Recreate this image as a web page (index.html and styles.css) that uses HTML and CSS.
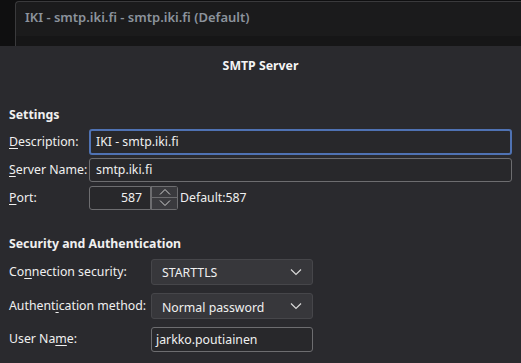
FILE: index.html
```html
<!DOCTYPE html>
<html>
<head>
<meta charset="utf-8">
<link rel="stylesheet" href="styles.css">
</head>
<body>
<div class="backdrop">
  <div class="bg-panel">
    <div class="bg-title">IKI - smtp.iki.fi - smtp.iki.fi (Default)</div>
    <div class="bg-strip"></div>
  </div>
</div>
<div class="dialog">
  <div class="dlg-title">SMTP Server</div>
  <div class="section">Settings</div>
  <div class="grid1">
    <label class="lbl"><u>D</u>escription:</label>
    <div class="input focus">IKI - smtp.iki.fi</div>
    <label class="lbl"><u>S</u>erver Name:</label>
    <div class="input">smtp.iki.fi</div>
    <label class="lbl"><u>P</u>ort:</label>
    <div class="port-row">
      <div class="input port">587</div>
      <div class="spin">
        <div class="spin-btn"><svg width="12" height="8" viewBox="0 0 12 8"><path d="M1 6.5 L6 1.5 L11 6.5" fill="none" stroke="#d0d0d0" stroke-width="1"/></svg></div>
        <div class="spin-btn"><svg width="12" height="8" viewBox="0 0 12 8"><path d="M1 1.5 L6 6.5 L11 1.5" fill="none" stroke="#d0d0d0" stroke-width="1"/></svg></div>
      </div>
      <span class="default">Default:587</span>
    </div>
  </div>
  <div class="section sec2">Security and Authentication</div>
  <div class="grid2">
    <label class="lbl">Co<u>n</u>nection security:</label>
    <div class="combo"><span>STARTTLS</span><svg width="12" height="8" viewBox="0 0 12 8"><path d="M1 1.5 L6 6.5 L11 1.5" fill="none" stroke="#d8d8d8" stroke-width="1.2"/></svg></div>
    <label class="lbl">Authent<u>i</u>cation method:</label>
    <div class="combo c2"><span>Normal password</span><svg width="12" height="8" viewBox="0 0 12 8"><path d="M1 1.5 L6 6.5 L11 1.5" fill="none" stroke="#d8d8d8" stroke-width="1.2"/></svg></div>
    <label class="lbl">User Na<u>m</u>e:</label>
    <div class="input user">jarkko.poutiainen</div>
  </div>
</div>
</body>
</html>
```
FILE: styles.css
```css
* { box-sizing: border-box; }
html, body { margin: 0; padding: 0; }
body {
  width: 521px;
  height: 363px;
  overflow: hidden;
  background: #2a2a2e;
  font-family: "Noto Sans", "DejaVu Sans", sans-serif;
  font-size: 12.3px;
  color: #f0f0f0;
}
.backdrop {
  height: 46px;
  background: #0f0f10;
  padding-left: 15px;
  padding-top: 1px;
}
.bg-panel {
  height: 45px;
  background: #1b1b1c;
  border-top: 1px solid #3a3a3c;
  border-left: 1px solid #3a3a3c;
  border-top-left-radius: 4px;
  display: flex;
  flex-direction: column;
}
.bg-title {
  height: 34px;
  padding-left: 9px;
  padding-top: 6px;
  color: #8c939c;
  font-weight: 600;
  font-size: 13px;
}
.bg-strip {
  flex: 1;
  background: #161617;
}
.dialog {
  padding: 0 9px;
}
.dlg-title {
  text-align: center;
  font-weight: 700;
  line-height: 18px;
  padding-top: 11px;
  height: 60px;
  color: #f4f4f4;
}
.section {
  font-weight: 700;
  line-height: 18px;
  height: 23px;
  color: #f0f0f0;
}
.sec2 { height: 24px; }
.grid1 {
  display: grid;
  grid-template-columns: 80px 1fr;
  grid-template-rows: 26px 24px 24px;
  row-gap: 3px;
  align-items: center;
  margin-bottom: 26px;
}
.grid1 > :nth-child(5), .grid1 > :nth-child(6) { margin-top: 1px; }
.lbl { line-height: 18px; white-space: nowrap; }
u { text-decoration-thickness: 1px; text-underline-offset: 2px; }
.input {
  height: 24px;
  border: 1px solid #6d6d70;
  border-radius: 3px;
  background: #28282b;
  padding: 0 6px;
  line-height: 22px;
  color: #f0f0f0;
  white-space: nowrap;
}
.input.focus {
  border: 2px solid #4f72b3;
  line-height: 22px;
  padding-left: 5px;
  height: 26px;
}
.port-row {
  display: flex;
  align-items: center;
}
.input.port {
  width: 62px;
  text-align: right;
  padding-right: 8px;
  border-radius: 3px 0 0 3px;
  height: 24px;
}
.spin {
  width: 27px;
  height: 24px;
  border: 1px solid #6d6d70;
  border-left: none;
  border-radius: 0 3px 3px 0;
  display: flex;
  flex-direction: column;
  background: #2f2f33;
}
.spin-btn {
  flex: 1;
  display: flex;
  align-items: center;
  justify-content: center;
  background: #3a3a3e;
  border-left: 1px solid #6d6d70;
}
.spin-btn + .spin-btn { border-top: 1px solid #6d6d70; }
.default { margin-left: 2px; }
.grid2 {
  display: grid;
  grid-template-columns: 142px 162px;
  grid-template-rows: 26px 26px 25px;
  row-gap: 8px;
  align-items: center;
}
.grid2 > :nth-child(5), .grid2 > :nth-child(6) { margin-top: -1px; }
.combo {
  height: 26px;
  background: #37373b;
  border: 1px solid #46464a;
  border-radius: 3px;
  display: flex;
  align-items: center;
  justify-content: space-between;
  padding: 0 10px 0 10px;
  color: #f0f0f0;
}
.combo.c2 span { padding-top: 3px; }
.input.user { height: 25px; padding-left: 4px; line-height: 23px; }
```
